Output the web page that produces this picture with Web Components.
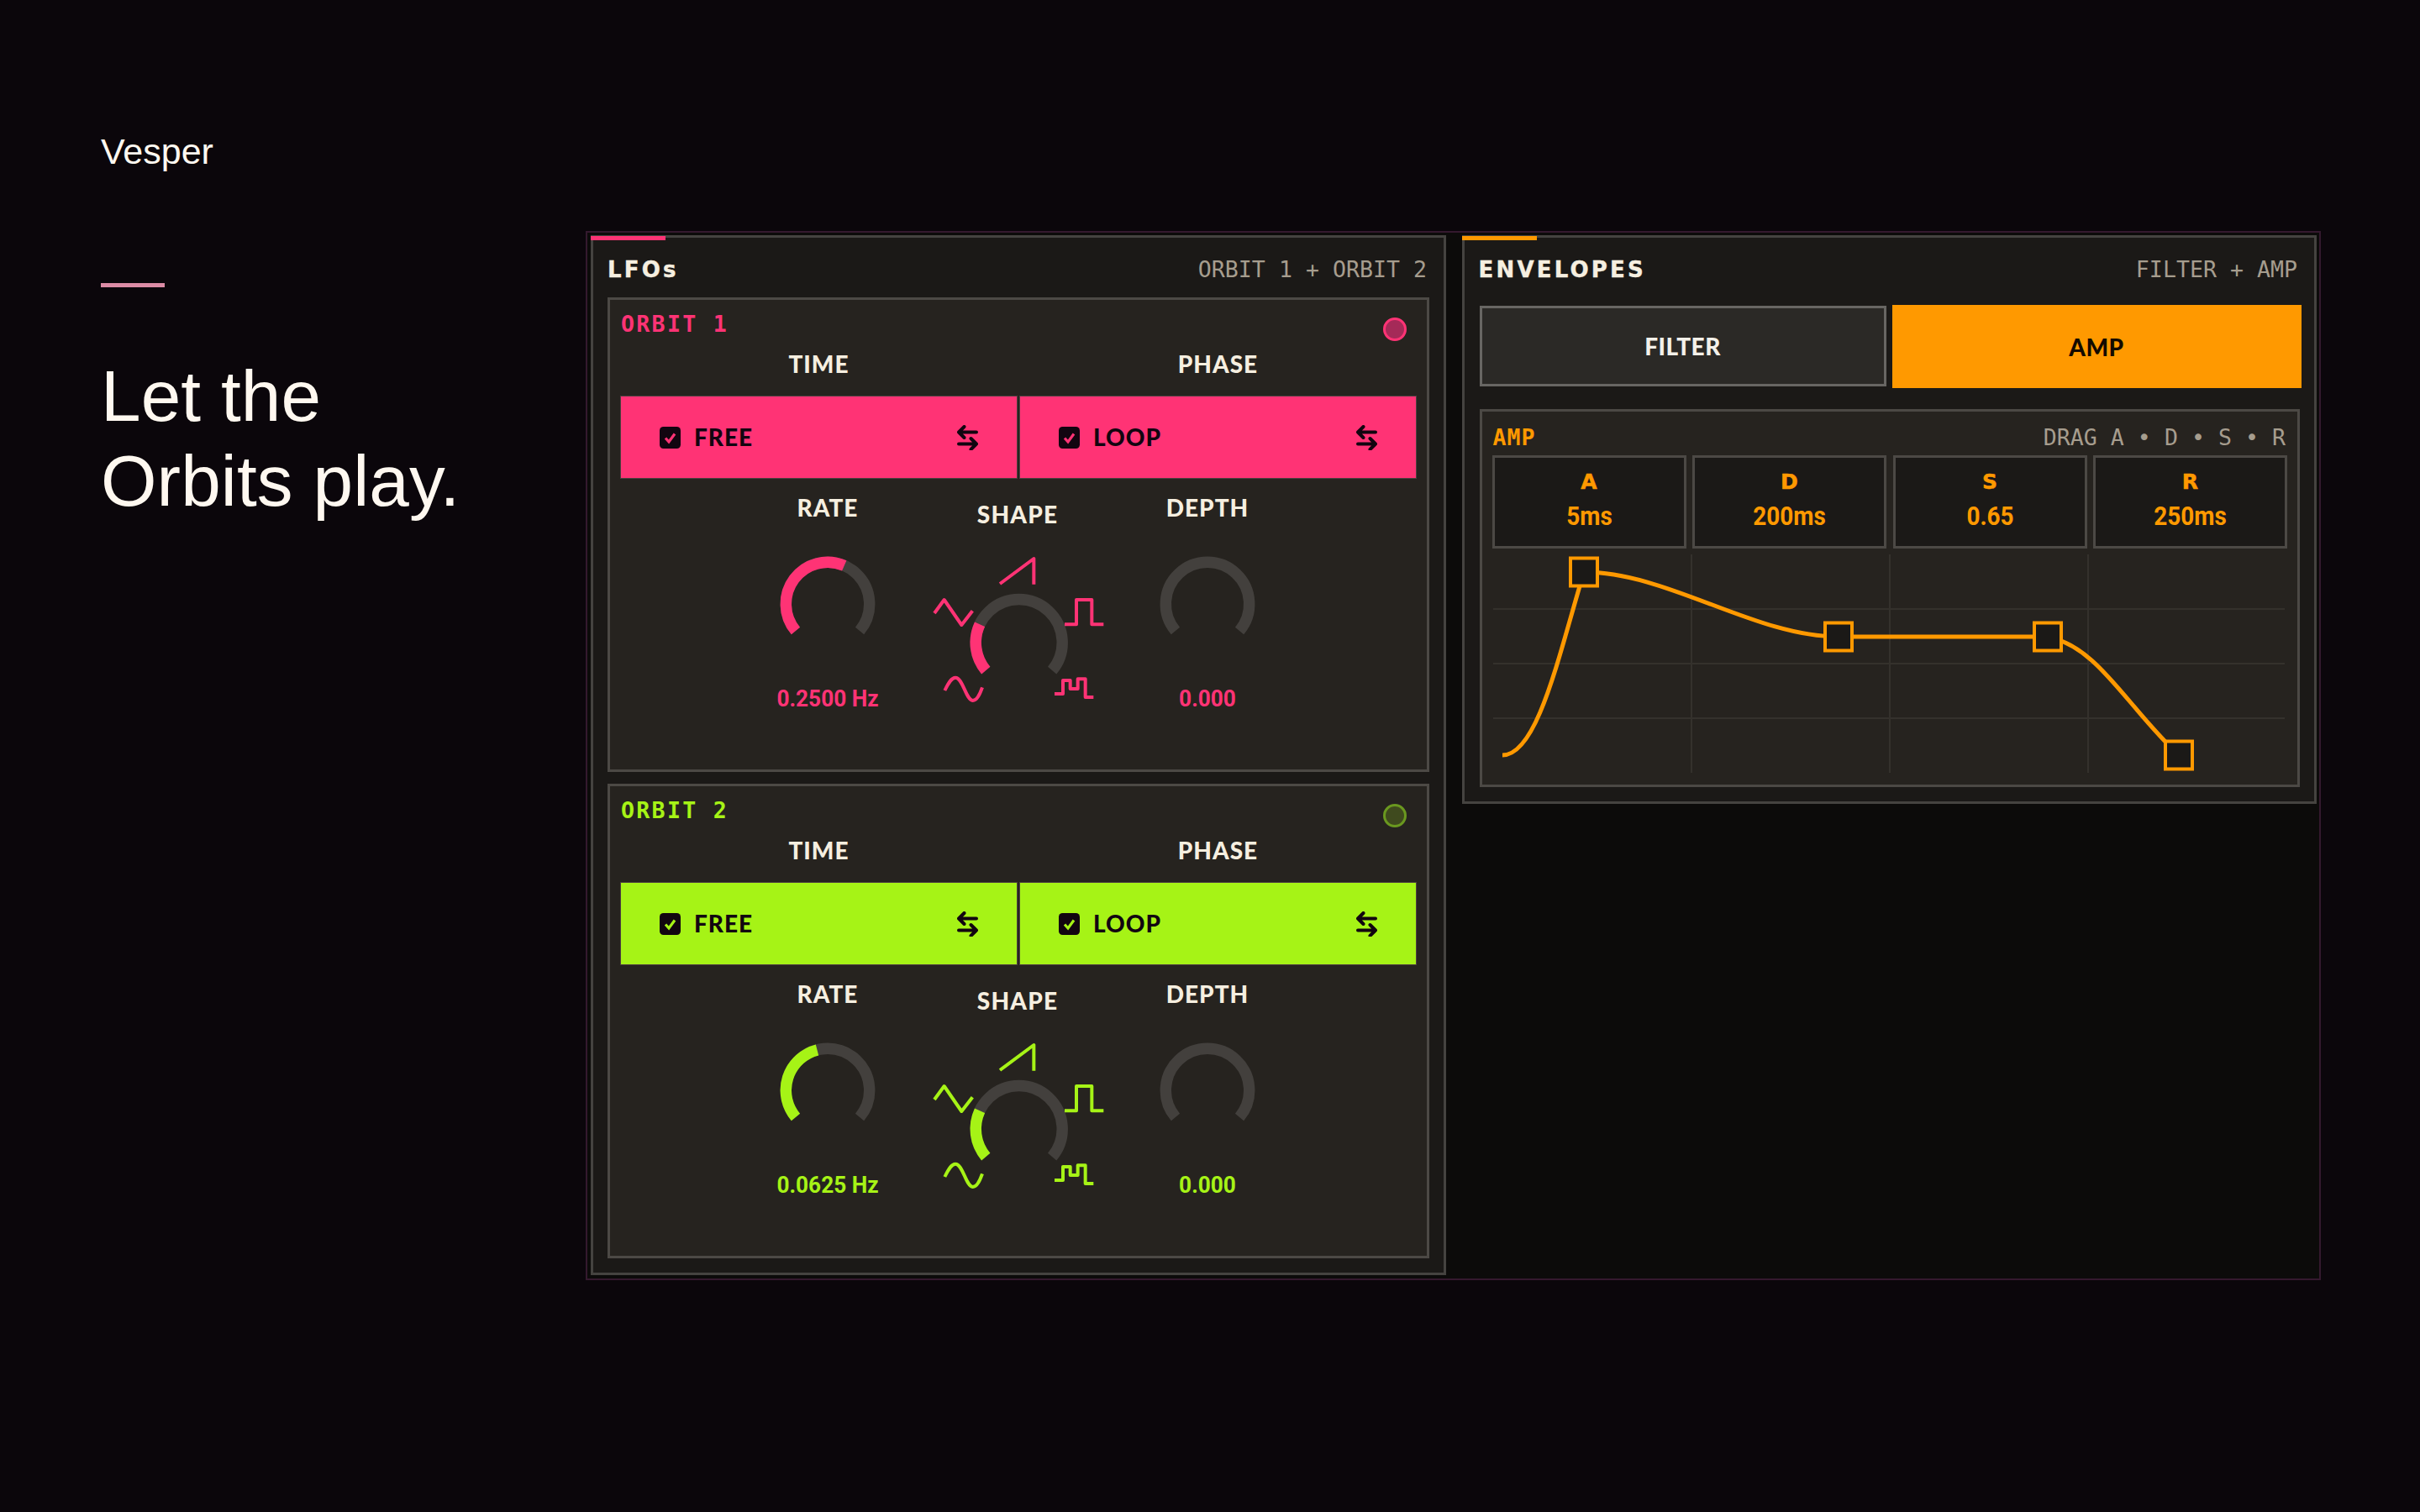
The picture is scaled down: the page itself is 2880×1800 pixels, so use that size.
<!DOCTYPE html>
<html>
<head>
<meta charset="utf-8">
<title>Vesper</title>
<style>
  html,body{margin:0;padding:0;background:#0b060b;}
  body{width:2880px;height:1800px;overflow:hidden;display:flex;align-items:flex-start;}
</style>
</head>
<body>
<vesper-hero>
  <span slot="brand">Vesper</span>
  <span slot="headline">Let the<br>Orbits play.</span>
</vesper-hero>
<synth-frame>
  <synth-panel title="LFOs" note="ORBIT 1 + ORBIT 2" accent="#ff3375">
    <orbit-card name="ORBIT 1" accent="#ff3375" rate="0.2500 Hz" rate-value="0.59" dot-fill="#a52a58" dot-line="#ff3375"></orbit-card>
    <orbit-card name="ORBIT 2" accent="#a6f316" rate="0.0625 Hz" rate-value="0.444" dot-fill="#3f4a1e" dot-line="#6a981f"></orbit-card>
  </synth-panel>
  <synth-panel title="ENVELOPES" note="FILTER + AMP" accent="#ff9900">
    <env-tabs></env-tabs>
    <env-card></env-card>
  </synth-panel>
</synth-frame>

<script>
const MONO = '"DejaVu Sans Mono","Liberation Mono",monospace';
const LABEL = 'Lato,"Noto Sans",sans-serif';
const VALUE = 'Roboto,Lato,sans-serif';
const HEAVY = '"DejaVu Sans",Lato,sans-serif';

// angle in degrees from 12 o'clock
function arcPath(cx, cy, r, from, to){
  const pt = a => {
    const t = a * Math.PI / 180;
    return (cx + r * Math.sin(t)).toFixed(2) + ' ' + (cy - r * Math.cos(t)).toFixed(2);
  };
  const big = to - from > 180 ? 1 : 0;
  return `M${pt(from)} A${r} ${r} 0 ${big} 1 ${pt(to)}`;
}

function knobArcs(cx, cy, r, value, color){
  const end = -130 + 260 * value;
  let out = `<path d="${arcPath(cx, cy, r, -130, 130)}" fill="none" stroke="#43403d" stroke-width="13.4"/>`;
  if(value > 0){
    out += `<path d="${arcPath(cx, cy, r, -130, end)}" fill="none" stroke="${color}" stroke-width="13.4"/>`;
  }
  return out;
}

class VesperHero extends HTMLElement{
  constructor(){
    super();
    this.attachShadow({mode:'open'});
    this.shadowRoot.innerHTML = `
    <style>
      :host{display:block;flex:none;width:697px;box-sizing:border-box;padding:150px 0 0 120px;color:#fff8f0;font-family:"Liberation Sans",Arial,sans-serif;}
      .brand{font-size:43px;line-height:60px;}
      .rule{width:76px;height:5px;background:#dc8ba6;margin-top:127px;}
      h1{font-size:85.5px;line-height:101px;font-weight:400;margin:79px 0 0 0;white-space:nowrap;letter-spacing:.1px;}
    </style>
    <div class="brand"><slot name="brand"></slot></div>
    <div class="rule"></div>
    <h1><slot name="headline"></slot></h1>`;
  }
}
customElements.define('vesper-hero', VesperHero);

class SynthFrame extends HTMLElement{
  constructor(){
    super();
    this.attachShadow({mode:'open'});
    this.shadowRoot.innerHTML = `
    <style>
      :host{display:grid;flex:none;grid-template-columns:1018px 1017.5px;column-gap:18.5px;align-items:start;box-sizing:border-box;
        width:2065px;height:1249px;margin-top:275px;padding:3px 3px 4px 4px;border:2px solid #34192e;background:#0c0b0a;}
    </style>
    <slot></slot>`;
  }
}
customElements.define('synth-frame', SynthFrame);

class SynthPanel extends HTMLElement{
  constructor(){
    super();
    this.attachShadow({mode:'open'});
    this.shadowRoot.innerHTML = `
    <style>
      :host{display:block;position:relative;box-sizing:border-box;padding:0 17px 17px;border:3px solid #454340;background:#1b1917;}
      .accent{position:absolute;left:-3px;top:-2px;width:89px;height:5px;background:var(--accent);}
      header{display:flex;justify-content:space-between;align-items:center;height:71px;padding:0 3px 0 0;box-sizing:border-box;}
      .title{font:700 26px/30px ${HEAVY};letter-spacing:3.2px;color:#f6efe0;position:relative;top:2px;-webkit-text-stroke:.4px #f6efe0;}
      .note{font:400 26.6px/30px ${MONO};color:#a69d8e;position:relative;top:2px;}
      .body{display:flex;flex-direction:column;gap:14px;}
    </style>
    <div class="accent"></div>
    <header><span class="title"></span><span class="note"></span></header>
    <div class="body"><slot></slot></div>`;
  }
  connectedCallback(){
    this.style.setProperty('--accent', this.getAttribute('accent'));
    this.shadowRoot.querySelector('.title').textContent = this.getAttribute('title');
    this.shadowRoot.querySelector('.note').textContent = this.getAttribute('note');
    this.removeAttribute('title');
  }
}
customElements.define('synth-panel', SynthPanel);

class ModeToggle extends HTMLElement{
  constructor(){
    super();
    this.attachShadow({mode:'open'});
    this.shadowRoot.innerHTML = `
    <style>
      :host{display:flex;align-items:center;box-sizing:border-box;height:99px;padding:0 46px;background:var(--accent);border:1px solid #4e4040;color:#120510;}
      .box{width:25px;height:26px;flex:none;display:block;}
      .text{font:900 28px/30px ${LABEL};letter-spacing:1px;margin-left:16px;flex:1;position:relative;top:-1px;}
      .swap{width:25px;height:30px;flex:none;display:block;}
    </style>
    <svg class="box" viewBox="0 0 25 26"><rect width="25" height="26" rx="4.5" fill="#120510"/><path d="M7 13.5 L11 18 L18 8.5" fill="none" stroke="var(--accent)" stroke-width="3.2"/></svg>
    <span class="text"><slot></slot></span>
    <svg class="swap" viewBox="0 0 25 30" fill="none" stroke="#120510" stroke-width="4" stroke-linecap="round" stroke-linejoin="round">
      <path d="M23 8.5H2M8.5 2L2 8.5L8.5 15"/><path d="M2 22.5H23M16.5 16L23 22.5L16.5 29"/>
    </svg>`;
  }
}
customElements.define('mode-toggle', ModeToggle);

class RotaryKnob extends HTMLElement{
  constructor(){
    super();
    this.attachShadow({mode:'open'});
  }
  connectedCallback(){
    const v = parseFloat(this.getAttribute('value') || 0);
    this.shadowRoot.innerHTML = `
    <style>
      :host{display:block;width:226px;text-align:center;}
      .label{font:900 28px/30px ${LABEL};letter-spacing:1px;color:#f6efe0;}
      svg{display:block;width:130px;height:130px;margin:35px auto 0;}
      .readout{font:700 28.5px/30px ${VALUE};color:var(--accent);margin-top:33px;transform:scaleX(.92);}
    </style>
    <div class="label">${this.getAttribute('label')}</div>
    <svg viewBox="0 0 130 130">${knobArcs(65, 65, 49.7, v, 'var(--accent)')}</svg>
    <div class="readout">${this.getAttribute('readout')}</div>`;
  }
}
customElements.define('rotary-knob', RotaryKnob);

class ShapeKnob extends HTMLElement{
  constructor(){
    super();
    this.attachShadow({mode:'open'});
    this.shadowRoot.innerHTML = `
    <style>
      :host{display:block;width:226px;padding-top:8px;text-align:center;}
      .label{font:900 28px/30px ${LABEL};letter-spacing:1.2px;color:#f6efe0;}
      svg{display:block;width:260px;height:220px;margin:13px -17px 0;}
      .waves{fill:none;stroke:var(--accent);stroke-width:12;stroke-linejoin:round;}
    </style>
    <div class="label">SHAPE</div>
    <svg viewBox="0 0 780 660">
      <g transform="scale(3)">${knobArcs(131.7, 125, 51.5, 0.25, 'var(--accent)')}</g>
      <g class="waves">
        <path d="M327 165L448 75V167"/>
        <path d="M93 270L128 222L190 312L229 262"/>
        <path d="M558 310H600V222H655V310H697"/>
        <path d="M130 546C145 515 155 500 168 500C195 500 205 580 230 582C245 582 255 560 264 535"/>
        <path d="M522 558H552V510H578V540H605V505H632V570H661"/>
      </g>
    </svg>`;
  }
}
customElements.define('shape-knob', ShapeKnob);

class OrbitCard extends HTMLElement{
  constructor(){
    super();
    this.attachShadow({mode:'open'});
  }
  connectedCallback(){
    const accent = this.getAttribute('accent');
    this.style.setProperty('--accent', accent);
    this.shadowRoot.innerHTML = `
    <style>
      :host{display:block;box-sizing:border-box;height:565px;padding:21px 12px 0;border:3px solid #4c4945;background:#26231f;}
      .head{display:flex;justify-content:space-between;align-items:flex-start;height:30px;}
      .name{font:700 26.6px/20px ${MONO};letter-spacing:2.3px;color:var(--accent);margin:-2px 0 0 1px;}
      .dot{width:28px;height:28px;box-sizing:border-box;border-radius:50%;border:3px solid ${this.getAttribute('dot-line')};background:${this.getAttribute('dot-fill')};margin:0 12px 0 0;}
      .heads,.toggles{display:grid;grid-template-columns:1fr 1fr;column-gap:2px;}
      .heads{margin-top:10px;}
      .heads div{font:900 28px/30px ${LABEL};letter-spacing:1px;color:#f6efe0;text-align:center;}
      .toggles{margin-top:23px;}
      .knobs{display:flex;justify-content:center;margin-top:19px;padding-right:2px;}
    </style>
    <div class="head"><span class="name">${this.getAttribute('name')}</span><span class="dot"></span></div>
    <div class="heads"><div>TIME</div><div>PHASE</div></div>
    <div class="toggles"><mode-toggle>FREE</mode-toggle><mode-toggle>LOOP</mode-toggle></div>
    <div class="knobs">
      <rotary-knob label="RATE" value="${this.getAttribute('rate-value')}" readout="${this.getAttribute('rate')}"></rotary-knob>
      <shape-knob></shape-knob>
      <rotary-knob label="DEPTH" value="0" readout="0.000"></rotary-knob>
    </div>`;
  }
}
customElements.define('orbit-card', OrbitCard);

class EnvTabs extends HTMLElement{
  constructor(){
    super();
    this.attachShadow({mode:'open'});
    this.shadowRoot.innerHTML = `
    <style>
      :host{display:grid;grid-template-columns:484px 487px;column-gap:7px;margin-top:9px;margin-bottom:11px;margin-left:1px;}
      div{display:flex;align-items:center;justify-content:center;box-sizing:border-box;font:900 28px/30px ${LABEL};letter-spacing:.5px;}
      .off{height:96px;margin-top:1px;border:3px solid #686663;background:#2b2926;color:#f4f1ea;}
      .on{height:99px;background:#ff9900;color:#140a00;}
    </style>
    <div class="off">FILTER</div><div class="on">AMP</div>`;
  }
}
customElements.define('env-tabs', EnvTabs);

class AdsrCell extends HTMLElement{
  constructor(){
    super();
    this.attachShadow({mode:'open'});
    this.shadowRoot.innerHTML = `
    <style>
      :host{display:block;box-sizing:border-box;height:111px;border:3px solid #4c4945;background:#1b1917;text-align:center;color:#ff9900;padding-top:14px;}
      .k{font:700 25px/30px ${HEAVY};-webkit-text-stroke:.5px #ff9900;}
      .v{font:700 31px/34px ${VALUE};margin-top:9px;transform:scaleX(.9);}
    </style>
    <div class="k"><slot name="k"></slot></div>
    <div class="v"><slot name="v"></slot></div>`;
  }
}
customElements.define('adsr-cell', AdsrCell);

class EnvGraph extends HTMLElement{
  constructor(){
    super();
    this.attachShadow({mode:'open'});
    const handles = [[108,21],[411,98],[660,98],[816,239]].map(([x,y]) =>
      `<rect x="${x-16}" y="${y-16.5}" width="32" height="33" fill="#1b1917" stroke="#ff9900" stroke-width="4"/>`).join('');
    this.shadowRoot.innerHTML = `
    <style>
      :host{display:block;margin:7px 0 0 1.5px;width:942px;height:260px;}
      svg{display:block;width:942px;height:260px;}
    </style>
    <svg viewBox="0 0 942 260">
      <path d="M0 65H942M0 130H942M0 195H942M236 0V260M472 0V260M708 0V260" fill="none" stroke="#34312c" stroke-width="2"/>
      <path d="M11 239C53 239 78 120 108 21C208 21 311 98 411 98H660C720 110 753 180 816 239" fill="none" stroke="#ff9900" stroke-width="5"/>
      ${handles}
    </svg>`;
  }
}
customElements.define('env-graph', EnvGraph);

class EnvCard extends HTMLElement{
  constructor(){
    super();
    this.attachShadow({mode:'open'});
    this.shadowRoot.innerHTML = `
    <style>
      :host{display:block;box-sizing:border-box;height:450px;margin-left:1px;padding:21px 12px 0;border:3px solid #4c4945;background:#26231f;}
      .top{display:flex;justify-content:space-between;height:20px;}
      .name{font:700 26.6px/20px ${MONO};letter-spacing:1px;color:#ff9900;margin-left:1px;}
      .hint{font:400 26.6px/20px ${MONO};color:#a69d8e;margin-right:2px;}
      .cells{display:grid;grid-template-columns:repeat(4,1fr);column-gap:7.5px;margin-top:11px;}
    </style>
    <div class="top"><span class="name">AMP</span><span class="hint">DRAG A • D • S • R</span></div>
    <div class="cells">
      <adsr-cell><span slot="k">A</span><span slot="v">5ms</span></adsr-cell>
      <adsr-cell><span slot="k">D</span><span slot="v">200ms</span></adsr-cell>
      <adsr-cell><span slot="k">S</span><span slot="v">0.65</span></adsr-cell>
      <adsr-cell><span slot="k">R</span><span slot="v">250ms</span></adsr-cell>
    </div>
    <env-graph></env-graph>`;
  }
}
customElements.define('env-card', EnvCard);
</script>
</body>
</html>
